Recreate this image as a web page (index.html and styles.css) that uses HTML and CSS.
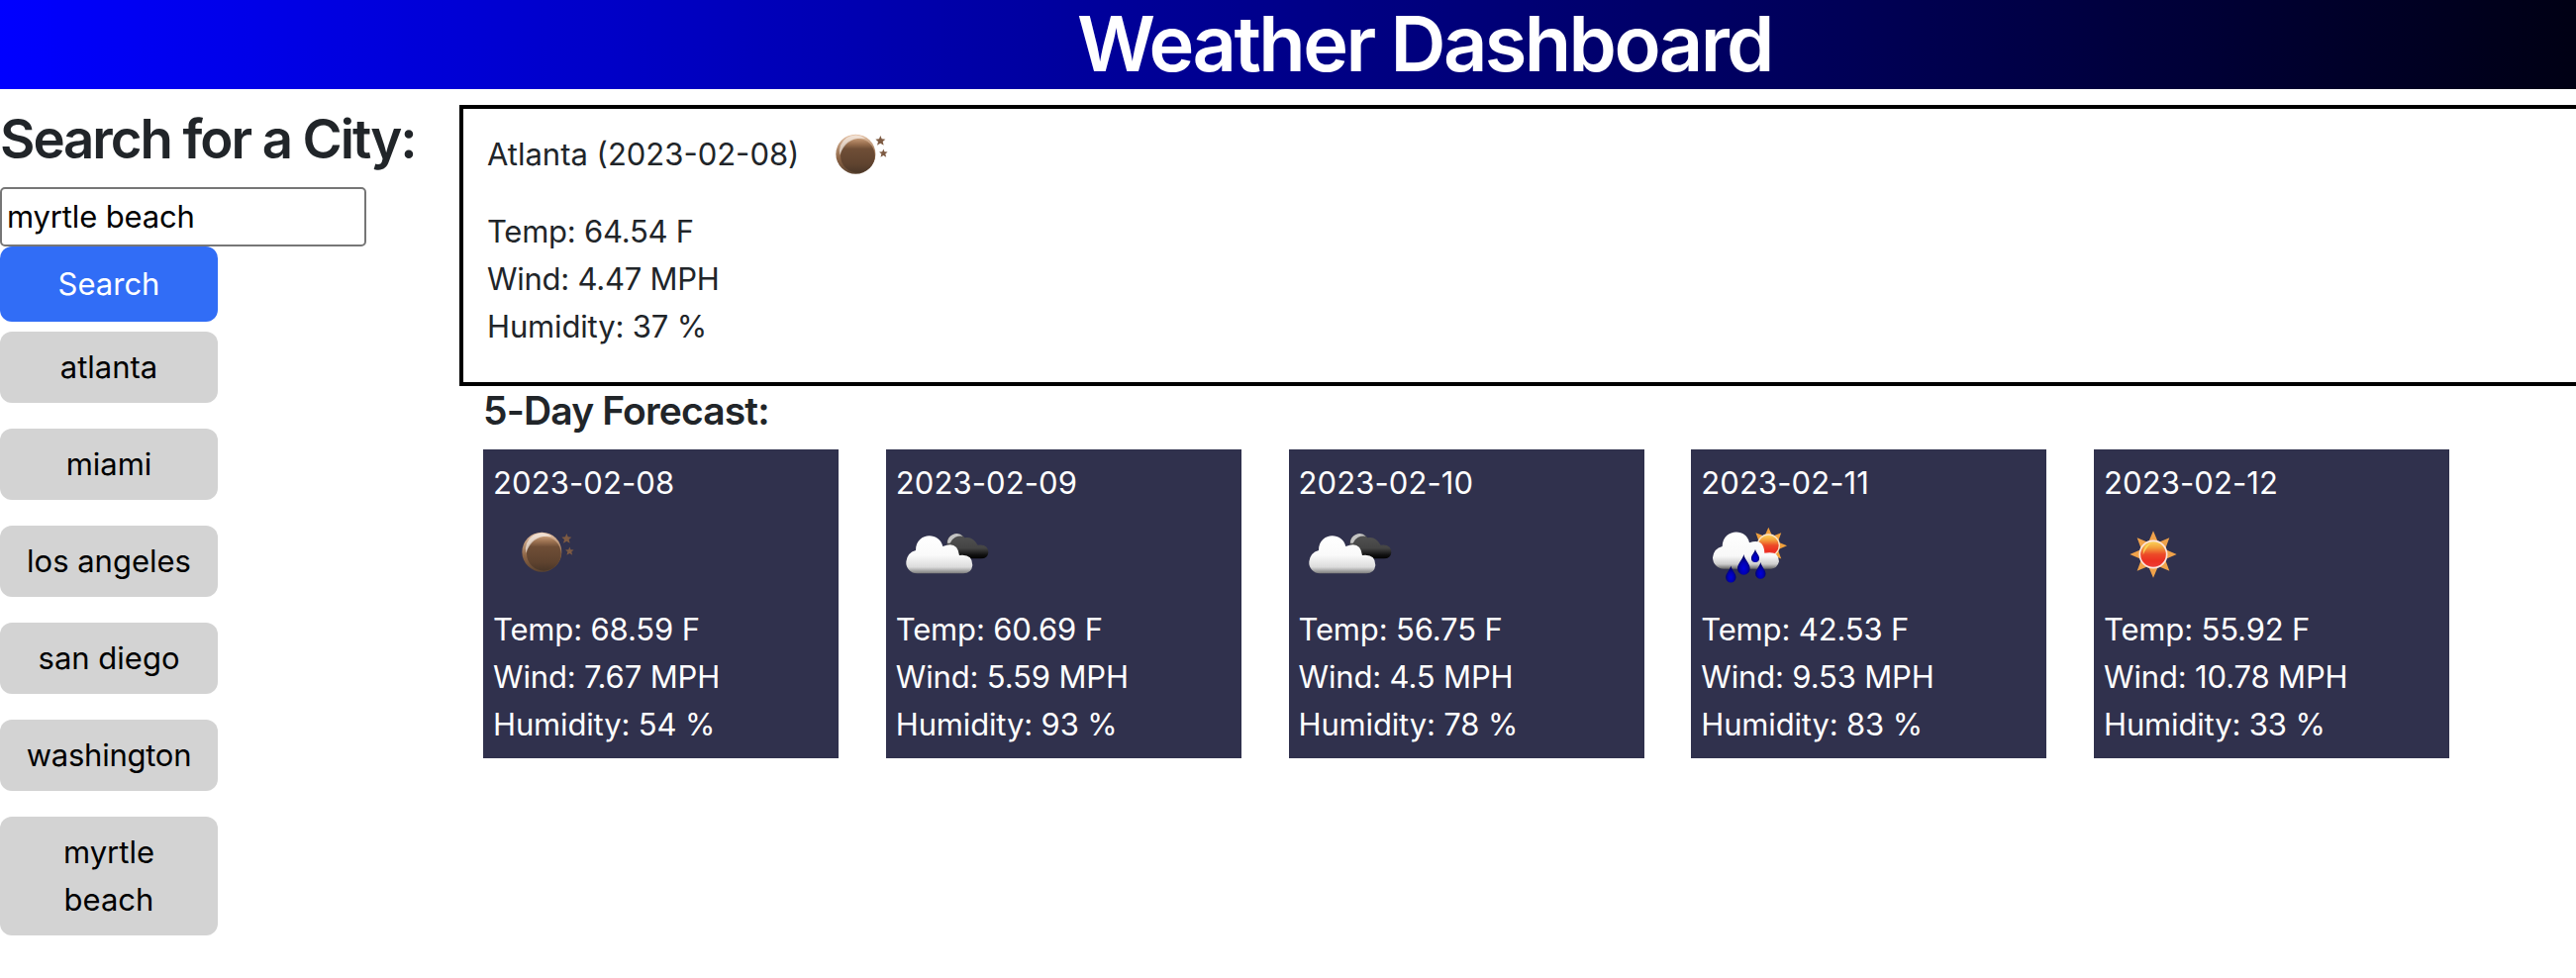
FILE: index.html
```
<!DOCTYPE html>
<html lang="en">
<head>
<meta charset="utf-8">
<title>Weather Dashboard</title>
<link rel="stylesheet" href="styles.css">
</head>
<body>
<svg class="defs" width="0" height="0" aria-hidden="true">
  <defs>
    <linearGradient id="moonFill" x1="0" y1="0" x2="0" y2="1">
      <stop offset="0" stop-color="#c39874"/><stop offset=".15" stop-color="#9a7050"/><stop offset=".3" stop-color="#6f4e36"/><stop offset=".75" stop-color="#5f432f"/><stop offset="1" stop-color="#4a3728"/>
    </linearGradient>
    <linearGradient id="moonRim" x1="0" y1="0" x2="0" y2="1">
      <stop offset="0" stop-color="#e6c3a6"/><stop offset=".6" stop-color="#8d6546"/><stop offset="1" stop-color="#5b4330"/>
    </linearGradient>
    <linearGradient id="cloudFill" gradientUnits="userSpaceOnUse" x1="0" y1="95" x2="0" y2="209">
      <stop offset="0" stop-color="#fff"/><stop offset=".5" stop-color="#fafafa"/><stop offset=".82" stop-color="#dcdcdc"/><stop offset="1" stop-color="#777"/>
    </linearGradient>
    <linearGradient id="darkFill" gradientUnits="userSpaceOnUse" x1="0" y1="82" x2="0" y2="164">
      <stop offset="0" stop-color="#555"/><stop offset=".6" stop-color="#444"/><stop offset=".85" stop-color="#111"/><stop offset="1" stop-color="#000"/>
    </linearGradient>
    <linearGradient id="rainCloud" gradientUnits="userSpaceOnUse" x1="0" y1="84" x2="0" y2="194">
      <stop offset="0" stop-color="#fff"/><stop offset=".65" stop-color="#f8f8f8"/><stop offset=".87" stop-color="#ccc"/><stop offset="1" stop-color="#666"/>
    </linearGradient>
    <linearGradient id="sunFill" x1="0" y1="0" x2="0" y2="1">
      <stop offset="0" stop-color="#fbd75c"/><stop offset=".25" stop-color="#f3a03c"/><stop offset=".5" stop-color="#ec4a28"/><stop offset=".75" stop-color="#ec2f22"/><stop offset="1" stop-color="#ee3d3a"/>
    </linearGradient>
    <radialGradient id="dropFill" cx=".5" cy=".68" r=".55">
      <stop offset="0" stop-color="#0000dc"/><stop offset=".5" stop-color="#0000b4"/><stop offset="1" stop-color="#000060"/>
    </radialGradient>
    <path id="star" d="M0-15 4-5 15-4 7 3 10 14 0 8-10 14-7 3-15-4-4-5Z"/>
    <path id="drop" d="M0-32C3-16 19-4 19 11A19 19 0 0 1-19 11C-19-4-3-16 0-32Z"/>
    <path id="rays" d="M0-71 15-36 49-50 36-15 71 0 36 15 49 50 15 36 0 71-15 36-49 50-36 15-71 0-36-15-49-50-15-36Z"/>
    <g id="moon">
      <circle cx="112" cy="143" r="60" fill="url(#moonRim)"/>
      <circle cx="118" cy="148" r="52" fill="url(#moonFill)"/>
      <path d="M64 146A49 49 0 0 1 142 96Q84 88 64 146Z" fill="#fff" opacity=".55"/>
      <use href="#star" x="187" y="102" fill="#7d5a42"/>
      <use href="#star" transform="translate(196 140) scale(.85)" fill="#7d5a42"/>
    </g>
    <g id="clouds">
      <path d="M168 118A30 30 0 0 1 222 100Q246 94 262 122Q294 118 294 145Q292 163 272 163H190Z" fill="url(#darkFill)"/>
      <path d="M170 116A28 28 0 0 1 217 95A34 34 0 0 0 178 116Z" fill="#c4c4c4"/>
      <path d="M78 208A33 33 0 0 1 45 172Q48 145 74 138C74 82 146 80 156 126Q200 108 206 153Q246 148 246 183Q243 208 218 208Z" fill="url(#cloudFill)"/>
    </g>
    <g id="rain">
      <use href="#rays" transform="translate(230 124) scale(.79)" fill="#f0a03c"/>
      <circle cx="230" cy="123" r="33" fill="url(#sunFill)" stroke="#fbe3c4" stroke-width="4"/>
      <path d="M94 194A34 34 0 0 1 61 160Q64 132 90 126C92 70 165 70 172 115Q216 100 218 146Q262 138 262 172Q256 194 238 194Z" fill="url(#rainCloud)"/>
      <g fill="url(#dropFill)">
        <use href="#drop" x="155" y="182"/>
        <use href="#drop" transform="translate(116 211) scale(.82)"/>
        <use href="#drop" transform="translate(190 155) scale(.64)"/>
        <use href="#drop" transform="translate(206 200) scale(.82)"/>
      </g>
    </g>
    <g id="sun">
      <use href="#rays" x="165" y="150" fill="#f0a24a"/>
      <circle cx="165" cy="150" r="41" fill="url(#sunFill)" stroke="#fce4dc" stroke-width="5"/>
      <path d="M134 152Q132 122 160 115Q144 128 134 152Z" fill="#fbe060" opacity=".8"/>
    </g>
  </defs>
</svg>

<header class="banner"><h1 class="banner-title">Weather Dashboard</h1></header>

<main class="layout">
  <aside class="sidebar">
    <h2 class="search-title">Search for a City:</h2>
    <input class="search-input" type="text" value="myrtle beach" aria-label="City">
    <button class="btn btn-primary">Search</button>
    <div class="history">
      <button class="btn even">atlanta</button>
      <button class="btn even">miami</button>
      <button class="btn">los angeles</button>
      <button class="btn">san diego</button>
      <button class="btn tight">washington</button>
      <button class="btn">myrtle beach</button>
    </div>
  </aside>

  <div class="content">
    <section class="current">
      <div class="current-head">
        <span class="even">Atlanta (2023-02-08)</span>
        <svg class="icon" viewBox="-36 6 300 300"><use href="#moon"/></svg>
      </div>
      <p class="row tight">Temp: 64.54 F</p>
      <p class="row tight">Wind: 4.47 MPH</p>
      <p class="row">Humidity: 37 %</p>
    </section>

    <h3 class="forecast-title">5-Day Forecast:</h3>
    <section class="forecast">
      <article class="card">
        <p class="row date">2023-02-08</p>
        <svg class="icon" viewBox="-36 6 300 300"><use href="#moon"/></svg>
        <p class="row">Temp: 68.59 F</p><p class="row">Wind: 7.67 MPH</p><p class="row">Humidity: 54 %</p>
      </article>
      <article class="card">
        <p class="row date">2023-02-09</p>
        <svg class="icon" viewBox="14 6 300 300"><use href="#clouds"/></svg>
        <p class="row">Temp: 60.69 F</p><p class="row">Wind: 5.59 MPH</p><p class="row">Humidity: 93 %</p>
      </article>
      <article class="card">
        <p class="row date">2023-02-10</p>
        <svg class="icon" viewBox="14 6 300 300"><use href="#clouds"/></svg>
        <p class="row">Temp: 56.75 F</p><p class="row">Wind: 4.5 MPH</p><p class="row">Humidity: 78 %</p>
      </article>
      <article class="card">
        <p class="row date">2023-02-11</p>
        <svg class="icon" viewBox="25 6 300 300"><use href="#rain"/></svg>
        <p class="row">Temp: 42.53 F</p><p class="row">Wind: 9.53 MPH</p><p class="row">Humidity: 83 %</p>
      </article>
      <article class="card">
        <p class="row date">2023-02-12</p>
        <svg class="icon" viewBox="15 6 300 300"><use href="#sun"/></svg>
        <p class="row">Temp: 55.92 F</p><p class="row">Wind: 10.78 MPH</p><p class="row">Humidity: 33 %</p>
      </article>
    </section>
  </div>
</main>
</body>
</html>
```
FILE: styles.css
```
* { box-sizing: border-box; }

body {
  margin: 0;
  background: #fff;
  color: #212529;
  font: 400 31px/48px Inter, "Liberation Sans", sans-serif;
  letter-spacing: -0.15px;
}

h1, h2, h3, p { margin: 0; }

.defs { display: block; }
.even { letter-spacing: 0; }
.tight { letter-spacing: -0.25px; }

.banner {
  height: 90px;
  padding-left: 1088px;
  background: linear-gradient(to right, #0000ff, #000014);
  color: #fff;
}

.banner-title {
  font-size: 77.5px;
  font-weight: 560;
  line-height: 88px;
  letter-spacing: -2.6px;
}

.layout { display: flex; }

.sidebar {
  width: 464px;
  flex: none;
  display: flex;
  flex-direction: column;
  align-items: flex-start;
  padding-top: 17px;
}

.search-title {
  padding-bottom: 15px;
  font-size: 54.5px;
  font-weight: 560;
  line-height: 67px;
  letter-spacing: -2.05px;
  white-space: nowrap;
}

.search-input {
  width: 370px;
  height: 60px;
  margin: 0;
  padding: 0 5px 2px;
  border: 2px solid #767676;
  border-radius: 5px;
  background: #fff;
  color: #000;
  font: inherit;
  letter-spacing: inherit;
}

.btn {
  display: block;
  width: 220px;
  padding: 12px 20px;
  border: 0;
  border-radius: 12px;
  background: #d3d3d3;
  color: #000;
  font: inherit;
  text-align: center;
}

.btn-primary {
  padding: 14px 20px;
  background: #316df6;
  color: #fff;
}

.history {
  display: flex;
  flex-direction: column;
  gap: 26px;
  padding-top: 10px;
}

.content { flex: 1; min-width: 0; padding-top: 16px; }

.current {
  height: 284px;
  padding-left: 24px;
  border: 4px solid #000;
  border-right: 0;
}

.current-head {
  display: flex;
  gap: 8px;
  height: 100px;
}

.current-head span { width: 315px; padding-top: 22px; white-space: nowrap; }

.icon { display: block; width: 100px; height: 100px; flex: none; }

.forecast-title {
  padding: 1px 0 15px 24px;
  font-size: 39px;
  font-weight: 560;
  line-height: 48px;
  letter-spacing: -0.85px;
}

.forecast {
  display: flex;
  gap: 47.75px;
  padding-left: 24px;
}

.card {
  width: 359px;
  height: 312px;
  padding: 10px;
  flex: none;
  background: #30314d;
  color: #fff;
}

.date { letter-spacing: 0.1px; }
```
